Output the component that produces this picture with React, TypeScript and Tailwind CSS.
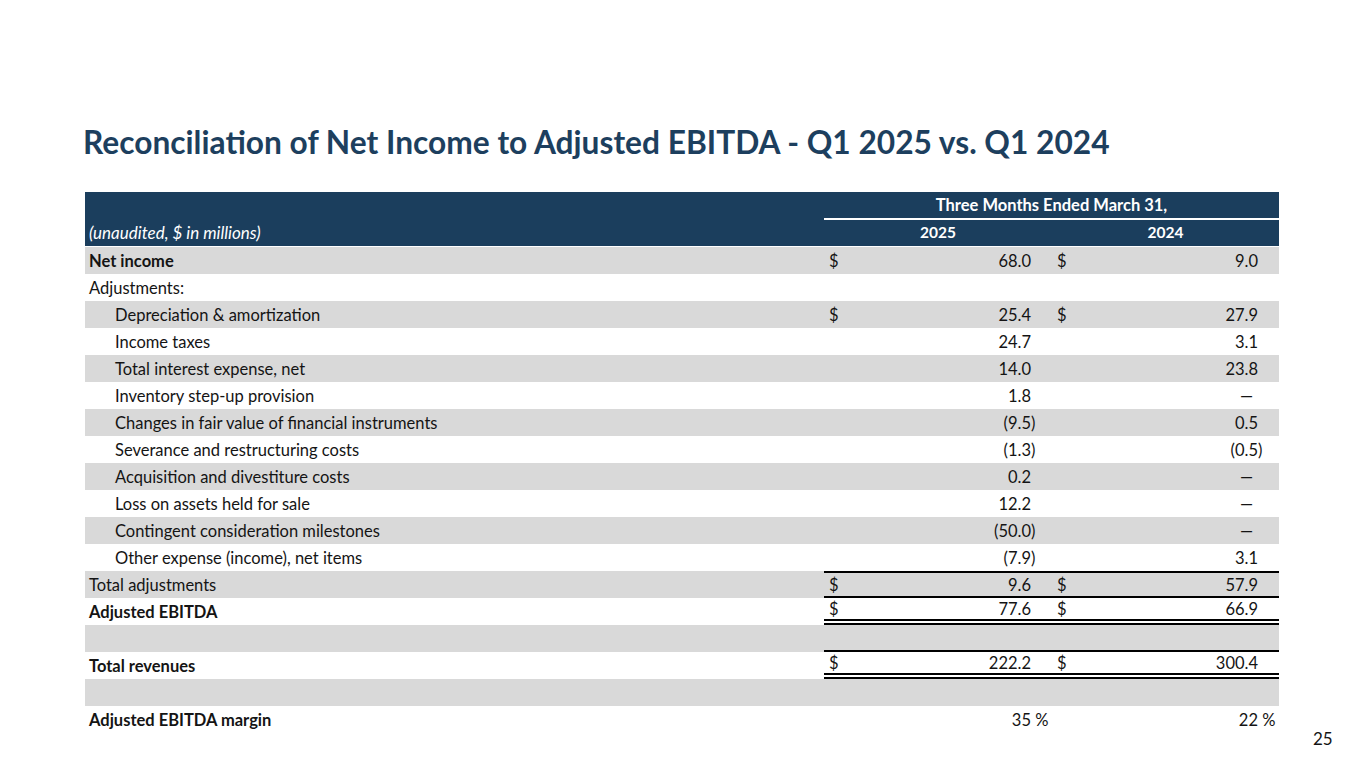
import React from "react";

type Row = {
  label: string;
  indent?: boolean;
  bold?: boolean;
  a?: string;
  b?: string;
  dollar?: boolean;
  pct?: boolean;
  kind?: "topline" | "ebitda" | "blank1" | "revenues" | "none";
};

const rows: Row[] = [
  { label: "Net income", bold: true, a: "68.0", b: "9.0", dollar: true },
  { label: "Adjustments:" },
  { label: "Depreciation & amortization", indent: true, a: "25.4", b: "27.9", dollar: true },
  { label: "Income taxes", indent: true, a: "24.7", b: "3.1" },
  { label: "Total interest expense, net", indent: true, a: "14.0", b: "23.8" },
  { label: "Inventory step-up provision", indent: true, a: "1.8", b: "—" },
  { label: "Changes in fair value of financial instruments", indent: true, a: "(9.5)", b: "0.5" },
  { label: "Severance and restructuring costs", indent: true, a: "(1.3)", b: "(0.5)" },
  { label: "Acquisition and divestiture costs", indent: true, a: "0.2", b: "—" },
  { label: "Loss on assets held for sale", indent: true, a: "12.2", b: "—" },
  { label: "Contingent consideration milestones", indent: true, a: "(50.0)", b: "—" },
  { label: "Other expense (income), net items", indent: true, a: "(7.9)", b: "3.1" },
  { label: "Total adjustments", a: "9.6", b: "57.9", dollar: true, kind: "topline" },
  { label: "Adjusted EBITDA", bold: true, a: "77.6", b: "66.9", dollar: true, kind: "ebitda" },
  { label: "", kind: "blank1" },
  { label: "Total revenues", bold: true, a: "222.2", b: "300.4", dollar: true, kind: "revenues" },
  { label: "", kind: "none" },
  { label: "Adjusted EBITDA margin", bold: true, a: "35", b: "22", pct: true },
];

function Value({ v, dollar, pct }: { v?: string; dollar?: boolean; pct?: boolean }) {
  if (v === undefined) return null;
  const neg = v.startsWith("(");
  const num = neg ? v.slice(0, -1) : v;
  const isDash = v === "—";
  return (
    <div className="flex h-full w-full items-center">
      <span className="w-[18px] pl-[5px]">{dollar ? "$" : ""}</span>
      <span className={`flex-1 text-right ${isDash ? "pr-[5px]" : ""}`}>{num}</span>
      <span className="w-[21px] text-left">{neg ? ")" : pct ? "\u00a0%" : ""}</span>
    </div>
  );
}

export default function App() {
  return (
    <div
      className="relative h-[768px] w-[1365px] overflow-hidden bg-white text-[#141414]"
      style={{ fontFamily: "Lato, 'Open Sans', sans-serif" }}
    >
      <h1 className="pl-[83px] pt-[122px] text-[31.7px] font-bold leading-[41px] text-[#1d3f5e]">
        Reconciliation of Net Income to Adjusted EBITDA - Q1 2025 vs. Q1 2024
      </h1>

      <div className="ml-[85px] mt-[29px] w-[1194px]">
        <div className="bg-[#1b3e5d] text-white">
          <div className="flex h-[28px]">
            <div className="w-[739px]" />
            <div className="flex w-[455px] items-center justify-center border-b-2 border-white text-[16.5px] font-bold">
              Three Months Ended March 31,
            </div>
          </div>
          <div className="flex h-[26px] items-center text-[15.5px]">
            <div className="w-[739px] pl-[4px] text-[17px] italic">(unaudited, $ in millions)</div>
            <div className="w-[228px] text-center font-bold">2025</div>
            <div className="w-[227px] text-center font-bold">2024</div>
          </div>
        </div>
        <div className="h-[1px] bg-white" />

        {rows.map((r, i) => {
          const gray = i % 2 === 0;
          let cellBorder = "";
          if (r.kind === "topline") cellBorder = "border-t-2 border-b-2 border-black";
          if (r.kind === "ebitda") cellBorder = "border-b-[6px] border-double border-black";
          if (r.kind === "blank1") cellBorder = "border-b-2 border-black";
          if (r.kind === "revenues") cellBorder = "border-b-[6px] border-double border-black";
          return (
            <div
              key={i}
              className={`flex h-[27px] pt-[1px] text-[16.5px] ${gray ? "bg-[#d9d9d9]" : "bg-white"}`}
            >
              <div
                className={`flex w-[739px] items-center ${r.indent ? "pl-[30px]" : "pl-[4px]"} ${
                  r.bold ? "font-bold" : ""
                }`}
              >
                {r.label}
              </div>
              <div className={`-mt-[1px] flex w-[455px] ${cellBorder}`}>
                <div className="h-full w-[228px] pt-[1px]">
                  <Value v={r.a} dollar={r.dollar} pct={r.pct} />
                </div>
                <div className="h-full w-[227px] pt-[1px]">
                  <Value v={r.b} dollar={r.dollar} pct={r.pct} />
                </div>
              </div>
            </div>
          );
        })}
      </div>

      <div className="absolute left-[1313px] top-[726px] text-[17px] text-[#141414]">25</div>
    </div>
  );
}
